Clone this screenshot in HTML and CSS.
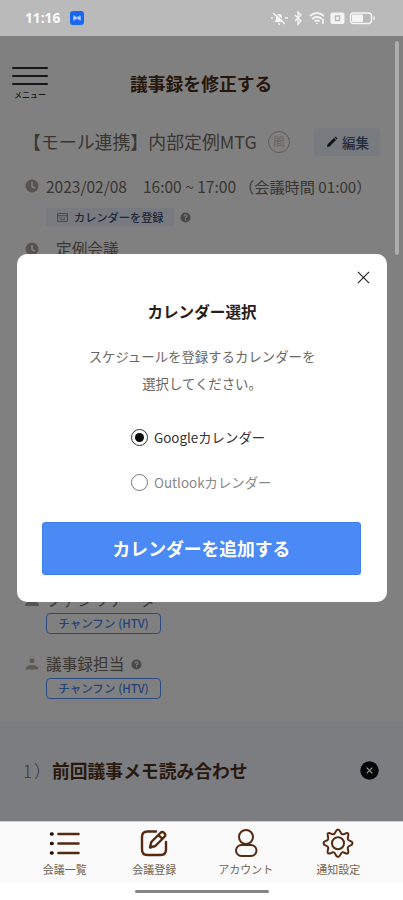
FILE: index.html
```html
<!DOCTYPE html>
<html lang="ja">
<head>
<meta charset="utf-8">
<title>議事録を修正する</title>
<link rel="stylesheet" href="styles.css">
</head>
<body>
<div class="phone">
  <header class="status">
    <span class="clock">11:16</span>
    <svg class="app-badge" viewBox="0 0 14 14"><rect width="14" height="14" rx="3" fill="#1767f2"/><path d="M4 4.5v5M10 4.5v5M4 7h6M5.7 5.5v3M8.3 5.5v3" stroke="#d6e4ff" stroke-width="1.2"/></svg>
    <svg class="status-icons" viewBox="0 0 108 16" fill="none" stroke="#f4f4f4" stroke-width="1.4">
      <path d="M4 12c2-1 2-3 2-5q0-3 3-3t3 3c0 2 0 4 2 5z" fill="#f4f4f4" stroke="none"/><path d="M8 14h2M1 8h2M15 8h3M3 3l12 11"/>
      <path d="M4 2l12 11" stroke="#bababa" stroke-width="1"/>
      <path d="M25 5l6 6-3 3V2l3 3-6 6"/>
      <path d="M40 6q7-6 14 0M42 9q5-4 10 0M44.500 11.500q2.500-2 5 0M47 13v1M53 9v5" stroke-width="1.700"/>
      <rect x="60.500" y="2.500" width="14" height="11.500" rx="2" fill="#f4f4f4" stroke="none"/><path d="M65.500 6h4v4.500h-4z" stroke="#bababa"/>
      <rect x="80.500" y="3" width="21" height="10.500" rx="3"/><rect x="82" y="4.500" width="11" height="7.500" rx="1" fill="#f4f4f4" stroke="none"/><path d="M104 6.500v3.500"/>
    </svg>
  </header>

  <main class="page">
    <div class="topbar">
      <div class="menu"><i></i><i></i><i></i><span>メニュー</span></div>
      <h1>議事録を修正する</h1>
    </div>
    <div class="meeting">
      <span class="meeting-name">【モール連携】内部定例MTG</span>
      <span class="round">間</span>
      <span class="edit"><svg viewBox="0 0 12 12"><path d="M1 11l.6-2.700L8 2l2 2-6.400 6.400zM8.600 1.400l1-1 2 2-1 1z" fill="#10141c"/></svg>編集</span>
    </div>
    <div class="row date-row">
      <svg class="ico" viewBox="0 0 14 14"><circle cx="7" cy="7" r="6.500" fill="#57544f"/><path d="M7 3v4.500l3 1.500" fill="none" stroke="#858585" stroke-width="1.400"/></svg>
      <span class="date">2023/02/08</span><span class="time">16:00 ~ 17:00</span><span class="length">（会議時間 01:00）</span>
    </div>
    <div class="register">
      <span class="register-chip"><svg viewBox="0 0 12 10"><path d="M.5.500h11v9H.5zM.5 3h11M3 5.500h2M7 5.500h2M3 7.500h6" fill="none" stroke="#424348"/></svg>カレンダーを登録</span>
      <svg class="help" viewBox="0 0 12 12"><circle cx="6" cy="6" r="5.500" fill="#484848"/><path d="M4.300 4.800Q4.500 3 6 3t1.700 1.500Q7.700 5.500 6 6.300V7M6 8v1.200" fill="none" stroke="#858585" stroke-width="1.100"/></svg>
    </div>
    <div class="row type-row">
      <svg class="ico" viewBox="0 0 14 14"><circle cx="7" cy="7" r="6.500" fill="#57544f"/><path d="M7 3v4.500l3 1.500" fill="none" stroke="#858585" stroke-width="1.400"/></svg>
      <span>定例会議</span>
    </div>
    <div class="row person-row facilitator">
      <svg class="ico" viewBox="0 0 14 14"><circle cx="7" cy="3.500" r="3" fill="#57544f"/><path d="M0 13q0-5 7-5t7 5z" fill="#57544f"/></svg>
      <span>ファシリテーター</span>
    </div>
    <div class="tag">チャンフン (HTV)</div>
    <div class="row person-row">
      <svg class="ico" viewBox="0 0 14 14"><circle cx="7" cy="3.800" r="2.500" fill="#5d5a56"/><path d="M.5 12.500q0-4.500 6.500-4.500t6.500 4.500z" fill="#5d5a56"/></svg>
      <span>議事録担当</span>
      <svg class="help" viewBox="0 0 12 12"><circle cx="6" cy="6" r="5.500" fill="#484848"/><path d="M4.300 4.800Q4.500 3 6 3t1.700 1.500Q7.700 5.500 6 6.300V7M6 8v1.200" fill="none" stroke="#858585" stroke-width="1.100"/></svg>
    </div>
    <div class="tag">チャンフン (HTV)</div>
    <section class="agenda">
      <span class="num">1）</span><h2>前回議事メモ読み合わせ</h2>
      <svg viewBox="0 0 20 20"><circle cx="10" cy="10" r="9.700" fill="#050505"/><path d="M7 7l6 6M13 7l-6 6" stroke="#999" stroke-width="1.300"/></svg>
    </section>
  </main>

  <nav class="tabs">
    <div class="tab t1"><svg viewBox="0 0 32 32" fill="none" stroke="#552912" stroke-width="2.600" stroke-linecap="round"><path d="M9.500 7h20M9.500 16.500h20M9.500 26h20"/><path d="M2.500 7h.6M2.500 16.500h.6M2.500 26h.6" stroke="#291109" stroke-width="3.600"/></svg><span>会議一覧</span></div>
    <div class="tab t2"><svg viewBox="0 0 32 32" fill="none" stroke="#552912" stroke-width="2.400" stroke-linecap="round" stroke-linejoin="round"><path d="M18 4.500H9.500Q4 4.500 4 10V22.500Q4 28 9.500 28H22.500Q28 28 28 22.500V15"/><path d="M12 20.500l1.300-5.500 9-9q2-2 4 0t0 4l-9 9zM20.500 8l4 4"/></svg><span>会議登録</span></div>
    <div class="tab t3"><svg viewBox="0 0 32 32" fill="none" stroke="#552912" stroke-width="2"><circle cx="16" cy="10" r="7"/><rect x="6" y="18" width="20.500" height="11" rx="5.500"/></svg><span>アカウント</span></div>
    <div class="tab t4"><svg viewBox="0 0 32 32" fill="none" stroke="#552912" stroke-width="2" stroke-linejoin="round"><path d="M16 2.500c2.500 0 2 4 4.200 4.700s4.200-2.400 5.800-.9-1 4-.1 6 4.600 1.300 4.600 3.900-3.700 2-4.600 4 1.600 4.400.1 6-3.800-1.500-5.800-.8S18.500 30 16 30s-2-3.900-4.200-4.600-4.200 2.400-5.800.8 1-4 .1-6-4.600-1.400-4.600-4 3.700-1.900 4.600-3.900-1.600-4.500-.1-6 3.800 1.600 5.800.9 1.700-4.700 4.200-4.700z"/><circle cx="16" cy="16.200" r="6"/></svg><span>通知設定</span></div>
    <div class="home"></div>
  </nav>

  <div class="scrollbar"></div>
  <section class="modal">
    <svg class="close" viewBox="0 0 14 14"><path d="M1 1l12 12M13 1L1 13" stroke="#222" stroke-width="1.200"/></svg>
    <h3>カレンダー選択</h3>
    <p>スケジュールを登録するカレンダーを<br>選択してください。</p>
    <div class="option on"><i></i><span>Googleカレンダー</span></div>
    <div class="option"><i></i><span>Outlookカレンダー</span></div>
    <div class="submit"><span>カレンダーを追加する</span></div>
  </section>
</div>
</body>
</html>
```
FILE: styles.css
```css
* { box-sizing: border-box; margin: 0; padding: 0; }
body { font-family: "Noto Sans CJK JP", "Noto Sans", sans-serif; background: #fff; }
svg { display: block; flex: none; }
span, h1, h2, h3 { white-space: nowrap; }
.phone { position: relative; width: 403px; height: 900px; overflow: hidden; display: flex; flex-direction: column; }

.status { height: 36px; flex: none; background: #bababa; display: flex; align-items: center; padding-left: 25px; }
.clock { width: 45px; font: 700 13.700px/20px "Open Sans", sans-serif; color: #fbfbfb; }
.app-badge { width: 14px; height: 14px; }
.status-icons { width: 108px; height: 16px; margin-left: 186px; }

.page { height: 785px; flex: none; background: #808080; color: #3a3632; overflow: hidden; }
.topbar { height: 84px; display: flex; }
.menu { width: 118px; padding: 31px 0 0 12px; }
.menu i { display: block; width: 36px; height: 2px; margin-bottom: 6px; background: #171717; border-radius: 1px; }
.menu span { display: block; width: 36px; text-align: center; font-size: 8px; font-weight: 500; line-height: 10px; margin-top: -1px; color: #171717; }
h1 { font-size: 17.800px; line-height: 26px; margin: 34px 0 0 12px; color: #27160c; font-weight: 700; }
.meeting { height: 44px; display: flex; align-items: center; padding-left: 23px; }
.meeting-name { width: 245px; font-size: 17.900px; line-height: 26px; margin-top: -2px; }
.round { width: 22px; height: 22px; border: 1px solid #605d59; border-radius: 50%; font-size: 11px; line-height: 19px; text-align: center; color: #666360; }
.edit { width: 66px; height: 28px; margin-left: 24px; border-radius: 4px; background: #777a7e; display: flex; align-items: center; padding-left: 12px; gap: 4px; font-size: 13.500px; font-weight: 500; color: #252d3d; }
.edit svg { width: 12px; height: 12px; }
.row { display: flex; align-items: center; padding-left: 25px; font-size: 15.700px; line-height: 24px; }
.ico { width: 14px; height: 14px; margin-right: 7px; }
.date-row { height: 44px; }
.date-row span { font-size: 15.500px; }
.date { width: 97px; }
.time { width: 96px; }
.date-row .length { font-size: 15.200px; }
.register { height: 18px; display: flex; align-items: center; padding-left: 46px; }
.register-chip { width: 128px; height: 18px; background: #777a7e; border-radius: 2px; display: flex; align-items: center; padding-left: 11px; gap: 6px; font-size: 11.200px; font-weight: 500; color: #1e263b; }
.register-chip svg { width: 11px; height: 9px; }
.help { width: 11px; height: 11px; margin-left: 6px; }
.type-row { height: 24px; margin-top: 11px; }
.type-row span { margin-left: 10px; }
.person-row { height: 24px; margin-top: 18px; }
.person-row .help { margin-left: 7px; }
.facilitator { margin-top: 327px; }
.tag { width: 115px; height: 21px; margin-left: 46px; border: 1.500px solid #2a4a83; border-radius: 4px; font-size: 11.500px; line-height: 18px; font-weight: 500; text-align: center; color: #24427a; }
.facilitator + .tag { margin-top: 1px; }
.person-row:not(.facilitator) + .tag { margin-top: 2px; }
.agenda { height: 100px; margin-top: 23px; padding: 0 24px 4px 23px; background: #7b7d80; display: flex; align-items: center; }
.num { width: 29px; font-size: 17px; font-weight: 300; letter-spacing: 2px; }
h2 { flex: 1; font-size: 17.800px; line-height: 26px; font-weight: 700; color: #29190f; }
.agenda svg { width: 19px; height: 19px; }

.tabs { flex: 1; position: relative; background: linear-gradient(#fafafa 61px, #fff 61px); display: flex; padding: 5px 20px 0; border-top: 1px solid #ccc; }
.tab { width: 90px; display: flex; flex-direction: column; align-items: center; }
.t2 { margin-right: 2px; }
.t3 { margin-right: 3px; }
.tab svg { width: 32px; height: 32px; }
.tab span { font-size: 11px; line-height: 16px; margin-top: 2px; color: #746451; }
.home { position: absolute; left: 135px; top: 68px; width: 134px; height: 3px; border-radius: 2px; background: #858585; }
.scrollbar { position: absolute; left: 395px; top: 41px; width: 4px; height: 214px; border-radius: 2px; background: #adadad; }

.modal { position: absolute; left: 17px; top: 254px; width: 370px; height: 348px; border-radius: 10px; background: #fff; display: flex; flex-direction: column; }
.close { width: 13px; height: 13px; margin: 17px 0 0 340px; }
h3 { font-size: 15.600px; line-height: 24px; margin-top: 15px; text-align: center; color: #27201c; font-weight: 700; }
.modal p { font-size: 13.400px; line-height: 27px; margin-top: 20px; text-align: center; color: #696663; }
.option { height: 20px; margin: 30px 0 0 114px; display: flex; align-items: center; gap: 6px; font-size: 13.400px; color: #333; }
.option + .option { margin-top: 25px; color: #898989; }
.option i { width: 17px; height: 17px; border: 1px solid #777; border-radius: 50%; display: grid; place-items: center; }
.option.on i { border-color: #333; }
.option.on i::after { content: ""; width: 9px; height: 9px; border-radius: 50%; background: #080808; }
.submit { width: 319px; height: 53px; margin: 30px 0 0 25px; background: #4b8af5; border: 1px solid #3c80ec; border-radius: 3px; display: grid; place-items: center; color: #fff; font-size: 17.800px; font-weight: 700; }
.submit span { margin-top: -2px; }
```
